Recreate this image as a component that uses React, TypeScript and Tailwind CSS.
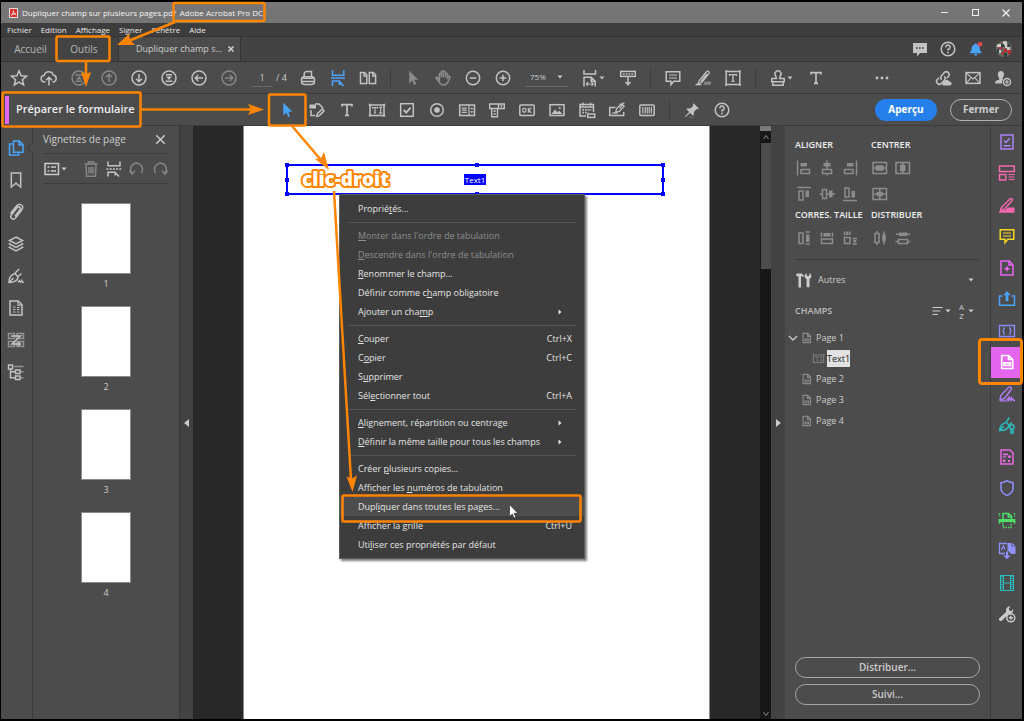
import React from "react";
import clsx from "clsx";
import { twMerge } from "tailwind-merge";

interface IconProps {
  name: keyof typeof glyphs;
  className?: string;
}

// 18x18 glyphs, stroked with the current colour unless a shape says otherwise
const glyphs = {
  star: <path d="M9 1.8l2.1 5 5.4.4-4.1 3.5 1.3 5.3L9 13.1l-4.7 2.9 1.3-5.3-4.1-3.5 5.4-.4z" />,
  cloudUp: (
    <>
      <path d="M5.5 13H4.6a3.3 3.3 0 0 1-.4-6.6A4.7 4.7 0 0 1 13.3 6a3.6 3.6 0 0 1 .3 7h-1.1" />
      <path d="M9 16.5V8.5M6 11.3l3-3 3 3" />
    </>
  ),
  first: (
    <>
      <circle cx="9" cy="9" r="7" />
      <path d="M5.5 6h7M6 12.3h6" />
      <path d="M9 7l3 3.5H6z" fill="currentColor" stroke="none" />
    </>
  ),
  up: (
    <>
      <circle cx="9" cy="9" r="7" />
      <path d="M9 13V5.5M6 8.3l3-3 3 3" />
    </>
  ),
  down: (
    <>
      <circle cx="9" cy="9" r="7" />
      <path d="M9 5v7.5M6 9.7l3 3 3-3" />
    </>
  ),
  last: (
    <>
      <circle cx="9" cy="9" r="7" />
      <path d="M5.5 12.3h7M6 5.8h6" />
      <path d="M9 11L6 7.5h6z" fill="currentColor" stroke="none" />
    </>
  ),
  back: (
    <>
      <circle cx="9" cy="9" r="7" />
      <path d="M13 9H5.5M8.3 6l-3 3 3 3" />
    </>
  ),
  forward: (
    <>
      <circle cx="9" cy="9" r="7" />
      <path d="M5 9h7.5M9.7 6l3 3-3 3" />
    </>
  ),
  print: (
    <>
      <path d="M5.2 7.5V4.3L7 2.5h5.5v5" />
      <rect x="2.5" y="7.8" width="13" height="7.6" rx="2.8" />
      <path d="M3 12.5h12M3.5 9.2h11" />
    </>
  ),
  fitWidth: <path d="M3.5 1v5.2h11.3V1M2 9h14M3.5 17v-5h6.8l4 5M10.3 12v3.2h3M14.6 17v-1" />,
  twoPages: <path d="M1.5 3.5h4l2.3 2.3v8.7H1.5zM5 3.5V7h2.8M10.3 3.5h4l2.3 2.3v8.7h-6.3zM13.8 3.5V7h2.8" />,
  pointer: <path d="M5.3 1.8v12.6l3-2.8 1.8 4.3 2-.9-1.8-4.2h4z" fill="currentColor" stroke="none" />,
  hand: <path d="M5.3 11.6V5.2a1 1 0 0 1 2 0v3.3V3a1 1 0 0 1 2 0v5.3-5a1 1 0 0 1 2.1 0v5.2-3.3a1 1 0 0 1 2.1 0v3.7l1-1.3c.8-.6 1.8-.2 1.5.7l-2 4.6c-.8 1.9-2.2 3-4.3 3-2.4 0-3.5-1-4.6-2.8L2 9.3c-.3-1 .9-1.5 1.6-.6z" />,
  minus: (
    <>
      <circle cx="9" cy="9" r="6.7" />
      <path d="M5.7 9h6.6" />
    </>
  ),
  plus: (
    <>
      <circle cx="9" cy="9" r="6.7" />
      <path d="M5.7 9h6.6M9 5.7v6.6" />
    </>
  ),
  fitPage: (
    <>
      <path d="M3 1v4h11.5V1M3 17.5V8.3h7.2l4 4v5.2M10.2 8.3v4h4" />
      <path d="M5.3 15h6.8M7 13.2L5.3 15 7 16.8M10.5 13.2l1.7 1.8-1.7 1.8" strokeWidth="1.1" />
    </>
  ),
  scroll: (
    <>
      <rect x="1.7" y="2.4" width="14.6" height="5" />
      <path d="M4 5h10" strokeDasharray="1.6 1.2" />
      <path d="M9 8v7.5M6.5 13L9 15.6l2.5-2.6" />
    </>
  ),
  comment: (
    <>
      <path d="M2.2 2.7h13.6v9.6H9.8L7 15.6v-3.3H2.2z" />
      <path d="M5 6h8M5 9h8" strokeWidth="1.2" />
    </>
  ),
  highlight: (
    <>
      <path d="M9 15.7L11 12.5h6v3.2z" fill="#858585" stroke="none" />
      <path d="M5.5 11.3l7.2-8.8c1.2-1 3.2.5 2.4 1.9l-7.2 8.9-4.400 2zM7 12.500L13 5M1.500 15.600h6" strokeWidth="1.3" />
    </>
  ),
  textBox: (
    <>
      <rect x="2.2" y="2.5" width="13.6" height="13" />
      <path d="M5.6 7V5.6h6.8V7M9 5.6v6.8M7.5 12.4h3M1 1.8h1.8M15.2 1.8H17M1 16.2h1.8M15.2 16.2H17" strokeWidth="1.3" />
    </>
  ),
  stamp: (
    <>
      <path d="M7.3 9.5L6.8 7a3 3 0 1 1 4.4 0l-.5 2.5h4.5v3.3H2.8V9.5z" />
      <path d="M3.8 13v3.2h10.4V13" />
    </>
  ),
  text: <path d="M4 5.5V3.6h10v1.9M9 3.6v10.8M7 14.4h4" strokeWidth="1.7" />,
  dots: (
    <g fill="currentColor" stroke="none">
      <circle cx="4" cy="9" r="1.4" />
      <circle cx="9" cy="9" r="1.4" />
      <circle cx="14" cy="9" r="1.4" />
    </g>
  ),
  linkCloud: (
    <>
      <path d="M7.5 10.7a3 3 0 0 1 0-4l2.8-3.1a2.8 2.8 0 0 1 4 4l-1.6 1.7M10.3 7.2a3 3 0 0 1 0 4l-2.9 3.2a2.8 2.8 0 0 1-4-4L5 8.7" />
      <path d="M10.3 16.6a2 2 0 0 1-.2-4 2.8 2.8 0 0 1 5.2-.2 2.1 2.1 0 0 1 .4 4.2z" fill="currentColor" stroke="none" />
    </>
  ),
  mail: (
    <>
      <rect x="2" y="3.6" width="14" height="10.8" />
      <path d="M2.3 4.2L9 10l6.7-5.8M2.5 14l4.6-5.4M15.5 14l-4.6-5.4" strokeWidth="1.1" />
    </>
  ),
  personAdd: (
    <>
      <path d="M1 14.5c0-2.700 2-3 3.900-3.700.6-.3.5-1 0-1.800C3.200 6 3.300 2 6.900 2s3.700 4 2 7c-.5.8-.5 1.500.1 1.800A5 5 0 0 0 8 14.500z" fill="currentColor" stroke="none" />
      <circle cx="13" cy="13" r="3.500" />
      <path d="M11 13h4M13 11v4" strokeWidth="1.2" />
    </>
  ),
  editPage: (
    <>
      <path d="M7 3h4l3.500 3.500V9M3 9v5.500h4" />
      <path d="M1.500 3.500h6.500v4H1.500z" fill="currentColor" stroke="none" />
      <path d="M8.600 15.500l.6-2.500 5-5 1.900 1.900-5 5z" />
    </>
  ),
  textField: (
    <>
      <rect x="2" y="4" width="14" height="10.5" />
      <path d="M4.5 7.8V6.5h5v1.3M7 6.5V12M6 12h2M11.2 6.3h3M11.2 12.2h3M12.7 6.3v6" strokeWidth="1.2" />
      <path d="M.8 2.8h2v2h-2zM15.2 2.8h2v2h-2zM.8 13.4h2v2h-2zM15.2 13.4h2v2h-2z" fill="currentColor" stroke="none" />
    </>
  ),
  checkbox: (
    <>
      <rect x="2.7" y="2.7" width="12.6" height="12.6" />
      <path d="M5.7 9l2.5 2.6 4.3-5" strokeWidth="2" />
    </>
  ),
  radio: (
    <>
      <circle cx="9" cy="9" r="6.3" />
      <circle cx="9" cy="9" r="2.8" fill="currentColor" stroke="none" />
    </>
  ),
  listBox: (
    <>
      <rect x="1.7" y="4" width="14.8" height="10.5" />
      <path d="M3.8 7.2h5M3.8 9.2h5M3.8 11.3h5M11 4.3v10" strokeWidth="1.2" />
      <path d="M12 8.3l1.8-2 1.8 2zM12 10.3l1.8 2 1.8-2z" fill="currentColor" stroke="none" />
    </>
  ),
  dropList: (
    <>
      <path d="M1.7 3h14.6v4.5H1.7zM3.7 7.5v8.3h5.8V7.5M10.5 3v4.500M5.500 10h2.300M5.500 13h2.300" strokeWidth="1.4" />
      <path d="M11.700 4.500h3.300l-1.650 1.800z" fill="currentColor" stroke="none" />
    </>
  ),
  okButton: (
    <>
      <rect x="1.8" y="4" width="14.4" height="10.5" rx="1" />
      <rect x="4.8" y="7.4" width="3" height="3.7" rx="1" strokeWidth="1.2" />
      <path d="M10.3 6.8v4.9M13.3 6.8l-2.6 2.4 2.7 2.5" strokeWidth="1.2" />
    </>
  ),
  image: (
    <>
      <rect x="2" y="3.7" width="14" height="10.8" />
      <path d="M3.5 13l3.5-4.5 2.5 2.7 1.7-1.4 3.3 3.2z" fill="currentColor" stroke="none" />
      <circle cx="11.7" cy="7" r="1.1" fill="currentColor" stroke="none" />
    </>
  ),
  calendar: (
    <>
      <path d="M8 15H2V3.5h13.5V11M2 6h13.5M5 1.8v3M12.5 1.8v3" />
      <path d="M4.3 8.8h9M4.3 11.7h6" strokeWidth="1.7" strokeDasharray="1.7 1" />
      <rect x="9.7" y="13" width="7" height="3.4" />
    </>
  ),
  signField: (
    <>
      <path d="M7.5 6.5H1.7v8h14V11" />
      <path d="M7.5 11.5l1.3-4.2 4.7-4.6 2.7 2.6-4.7 4.8zM11.5 7.3l4.8-6" strokeWidth="1.3" />
      <path d="M4 12h6" strokeWidth="1.2" />
    </>
  ),
  barcode: (
    <>
      <rect x="1.8" y="4" width="14.4" height="10.5" rx="1" />
      <path d="M4.8 6v6.5M7.2 6v6.5M9.2 6v6.5M11.2 6v6.5M13.4 6v6.5" strokeWidth="1.2" />
    </>
  ),
  pin: (
    <>
      <path d="M10.5 2.3l5.3 5.2-1.5.8-1-.1-2.3 2.5-.1 3-1 .9-2.7-2.7-4.7 4-.5-.4 4.2-4.6L3.5 8.2l1-.9 3 .1 2.6-2.700-.2-1.200z" fill="currentColor" stroke="none" />
      <path d="M6 16.3h5" stroke="#666" />
    </>
  ),
  help: (
    <>
      <circle cx="9" cy="9" r="6.8" />
      <path d="M6.9 7.4A2.1 2.1 0 1 1 9 9.3v1.2" />
      <circle cx="9" cy="12.5" r=".9" fill="currentColor" stroke="none" />
    </>
  ),
  thumbs: (
    <>
      <path d="M6.5 2h5.8l3.7 3.7v7.500H6.500zM12 2v4h4" />
      <path d="M6 5H2.5v11h9.2v-2.5" />
    </>
  ),
  bookmark: <path d="M4.3 2h9.400v14L9 12.200 4.300 16z" />,
  clip: <path d="M8 13.3l5-6.8c1.3-2-1.300-3.900-2.800-2L4.300 12c-1.800 2.800 2 5.700 4.200 3l6.300-8.300C17.500 3 12.800-.8 9.700 2.700L3.500 10.500" />,
  layers: (
    <>
      <path d="M9 2l6.500 3.500L9 9 2.500 5.500z" />
      <path d="M3.5 8.3L2.5 9 9 12.4 15.5 9l-1-.7M3.5 11.7l-1 .7L9 16l6.5-3.6-1-.7" />
    </>
  ),
  penSign: (
    <>
      <path d="M2 15.500C1.500 11 4.500 7.300 8 6.500l3 3.200c0 4-4.500 6-9 5.800zM2.500 15l4-4M8.200 6L12 2M11.200 9.300l3.300-2.800" />
      <path d="M10.8 15.3l1.5-2 1 2 1.500-2 .7 2h1.500" strokeWidth="1.2" />
    </>
  ),
  article: (
    <>
      <path d="M3 2h8.200L15 5.800V16H3z" />
      <path d="M11 2v4.200h4M6 8h2.500M6 10.500h2.500M6 13h2.500M10 8.500h2.500M10 10.500h2.500M10 13h2.500" strokeWidth="1.2" />
    </>
  ),
  order: (
    <>
      <path d="M1.5 2.500h6v5h-6zM10 2.500h6.500v5H10zM1.500 10.500h6v5h-6zM10 10.500h6.500v5H10z" opacity=".6" />
      <path d="M4 5h9.500L5 13h8M11 11l2.500 2-2.500 2" />
    </>
  ),
  tags: (
    <>
      <path d="M1.5 2h4v4h-4zM8.500 7h4.500v3.500H8.500zM8.500 13h4.500v3.500H8.500zM3.500 6.500v8.200h5M3.500 8.700h5" />
      <path d="M7 3.500h9.500M14 8.700h2.500M14 14.700h2.500" opacity=".6" />
    </>
  ),
  listOptions: (
    <>
      <rect x="2" y="3.5" width="13.5" height="11" />
      <path d="M4.5 7h2M4.5 11h2M8 7h5M8 11h5" strokeWidth="1.7" />
    </>
  ),
  trash: <path d="M2.500 4h13M6.300 4V2h5.400v2M4 4.500l.6 11.800h8.800L14 4.500M7 7v6.500M9 7v6.500M11 7v6.500" />,
  insert: (
    <>
      <path d="M3 1.500v4.300h12V1.500M3 16.500v-4.300h7l4 4.300M10.300 12.500v3" />
      <path d="M1.500 9h15" strokeDasharray="2 1.2" />
    </>
  ),
  rotateLeft: <path d="M4.200 13.500A6 6 0 1 1 13.300 13M1.300 11l3 3 2.700-3.400" />,
  rotateRight: <path d="M13.800 13.500A6 6 0 1 0 4.700 13M16.700 11l-3 3-2.700-3.400" />,
  alignLeft: (
    <>
      <path d="M2.500 1.500v15M6 10.500h8.500v4H6z" />
      <path d="M5.500 4h6.500v3.500H5.500z" fill="currentColor" stroke="none" />
    </>
  ),
  alignCenter: (
    <>
      <path d="M9 1.500v9M9 14.500v2M4.500 10.500h9v4h-9z" />
      <path d="M5.500 4h7v3.500h-7z" fill="currentColor" stroke="none" />
    </>
  ),
  alignRight: (
    <>
      <path d="M15.500 1.500v15M3.500 10.500H12v4H3.500z" />
      <path d="M6 4h6.500v3.500H6z" fill="currentColor" stroke="none" />
    </>
  ),
  alignTop: (
    <>
      <path d="M2 2.500h14M4 6h4v9H4z" />
      <path d="M10.500 5.500H14v6.500h-3.500z" fill="currentColor" stroke="none" />
    </>
  ),
  alignMiddle: (
    <>
      <path d="M1.500 9h3M8.500 9H17M4.500 4.500h4v9h-4z" />
      <path d="M11 5.500h3.500v7H11z" fill="currentColor" stroke="none" />
    </>
  ),
  alignBottom: (
    <>
      <path d="M2 15.500h14M4 3h4v9H4z" />
      <path d="M10.500 6H14v6.500h-3.500z" fill="currentColor" stroke="none" />
    </>
  ),
  centerH: (
    <>
      <path d="M2 3.500h13.500v11H2zM2 9h13" />
      <path d="M5.500 7h6.500v4H5.500z" fill="currentColor" />
    </>
  ),
  centerV: (
    <>
      <path d="M2 3.500h13.500v11H2zM8.800 3.500v11" />
      <path d="M6.800 6.500h4v5h-4z" fill="currentColor" />
    </>
  ),
  centerBoth: (
    <>
      <path d="M2 3.500h13.500v11H2zM2 9h13M8.800 3.500v11" />
      <path d="M6.500 7.500h4.500v3H6.500z" fill="currentColor" />
    </>
  ),
  sameHeight: (
    <>
      <path d="M4 4h4v10.500H4zM10.500 3H15M10.500 15H15" />
      <path d="M11 5.500h3.500v7.500H11z" fill="currentColor" stroke="none" />
    </>
  ),
  sameWidth: (
    <>
      <path d="M3.500 10h11v4.500h-11zM3.500 3.500V8M14.500 3.500V8" />
      <path d="M5.500 4h7v3.500h-7z" fill="currentColor" stroke="none" />
    </>
  ),
  sameBoth: (
    <>
      <path d="M3.500 8.500H9v6H3.500zM3.500 2.500V6M9 2.500V6M11.500 9.500H16M11.500 15H16" />
      <path d="M5 2.500h2.500v3.500H5zM12.300 11h3v2.500h-3z" fill="currentColor" stroke="none" />
    </>
  ),
  distH: (
    <>
      <path d="M4 4.500h4v9H4zM6 2v2.500M6 13.500V16M13 2.500v13" />
      <path d="M11.300 5.500h3.500v7h-3.500z" fill="currentColor" stroke="none" />
    </>
  ),
  distV: (
    <>
      <path d="M2 5.200h14M4.500 10.500h9v4h-9zM1.500 12.500h3M13.500 12.500h3" />
      <path d="M5 3.500h8V7H5z" fill="currentColor" stroke="none" />
    </>
  ),
  tools: (
    <g fill="currentColor" stroke="none">
      <path d="M1.500 2.500h5l2.500 2-.8 1.500-2.200-.9V16.500H3.500V5.500L1.200 5z" />
      <path d="M11.500 2l.3 3h2.400l.4-3c2.600 1.700 2.300 5-.1 6v7.500c0 1.200-2.900 1.200-2.900 0V8C9 7 9 3.700 11.500 2z" />
    </g>
  ),
  sort: <path d="M2 4.500h13M2 9h10M2 13.500h7" />,
  page: <path d="M4 3h6l3.500 3.500V15H4zM9.800 3v4h3.700M6.500 12.500v-2.200h4.500v2.200z" />,
  requestSign: (
    <>
      <rect x="3" y="2" width="12" height="14" />
      <path d="M6 7.500l2 2 3.700-4.200M5.500 12.800h7" />
    </>
  ),
  organize: (
    <>
      <path d="M1.500 2h14.800v5.500H1.500zM1.500 10.500h6.300V16H1.500z" />
      <path d="M10.500 10.500h6M10.500 13h6M10.500 15.500h6" strokeWidth="1" />
    </>
  ),
  editPdf: (
    <>
      <path d="M3.500 11.500L11.800 3c1.500-1.200 3.200.2 2.200 1.800l-8 8.600-3.800 1.800z" />
      <path d="M1 16.800c1-2 3-2.800 5.500-2.300L10 11.500h6.500v5.300z" fill="currentColor" stroke="none" />
    </>
  ),
  createPdf: (
    <>
      <path d="M3 2h8.200L15 5.800V16H3zM11 2v4h4" />
      <path d="M9 6.500l1 2.200 2.500 1L10 10.800 9 13l-1-2.200-2.500-1.100L8 8.700z" fill="currentColor" stroke="none" />
    </>
  ),
  exportPdf: (
    <>
      <path d="M4.500 6h-3v9.300h15V6h-3" />
      <path d="M9 1l3.700 4.200h-2.300v6H7.600v-6H5.300z" fill="currentColor" stroke="none" />
    </>
  ),
  code: <path d="M1.500 3.500h15v11h-15zM7 6c-1.500 0-1.300.5-1.300 1.500S5.200 9 4.500 9c.7 0 1.200.5 1.200 1.500S5.500 12 7 12M11 6c1.500 0 1.300.5 1.300 1.500s.5 1.500 1.200 1.500c-.7 0-1.200.5-1.200 1.500s.2 1.500-1.300 1.500" strokeWidth="1.3" />,
  form: <path d="M3.700 2.500h7l4 4v9h-11zM10.500 2.500v4h4M6 12.300v-2.500h6.300v2.500z" strokeWidth="1.7" />,
  fillSign: (
    <>
      <path d="M2 14.800l.9-4.500L10.500 2.500c1.800-1.300 3.800.3 2.600 2L6.500 13.500z" />
      <path d="M2 15.800h6l3.500-4.300-1 4 2.800-3-.3 3 2-1.700.3 1.700h1.700" strokeWidth="1.3" />
    </>
  ),
  certify: (
    <>
      <path d="M1.500 14.500C2 10 5 7 8.500 6.500l2.500 2.700c-1 3.800-4.500 5.500-9.500 5.300zM2 14l4-4M8.300 6l3-4.500M11.500 8.500l2.500-2" />
      <circle cx="14" cy="11" r="2.2" />
      <path d="M13 13.300V17l1-.7 1 .7v-3.700" />
    </>
  ),
  fillForm: (
    <>
      <path d="M3 2h9l3 3v11H3z" />
      <path d="M5 5.500h5v1.800H5zM10 7.500h3v2.300h-3zM5 8.200h3v1.200H5zM5 11.500h2.500V14H5zM10 12h2v2h-2z" fill="currentColor" stroke="none" />
    </>
  ),
  shield: <path d="M9 1.700c1.800 1.500 3.700 2 6 2.100v5.500c0 3.500-2.500 5.700-6 7.200-3.500-1.500-6-3.700-6-7.200V3.800c2.300-.1 4.200-.6 6-2.100z" />,
  scan: (
    <>
      <path d="M5 8V2.500h5.500l3 2.500v3M10.300 2.800V6h3" />
      <path d="M1.500 12.500V9h15v3.500M2 10h14" strokeWidth="1.8" />
      <path d="M5 11.500v5h8v-5M1.500 2v3.500M16.500 2v3.500" strokeDasharray="1.500 1" />
    </>
  ),
  exportTo: (
    <>
      <path d="M7 11.500H1.500v-10H9M3.500 8l2-4 1.500 3.500" strokeWidth="1.3" />
      <path d="M9.500 1h4v3.500H17.500V12h-4.500L10.700 9H9.500zM14.300 1l3 2.700h-3zM8 9.500h2.200v4h2.500L9 17.300l-3.700-3.800H8z" fill="currentColor" stroke="none" />
    </>
  ),
  film: (
    <>
      <rect x="2.5" y="1.5" width="13" height="15" strokeWidth="1" />
      <path d="M5.500 1.500v15M12.500 1.500v15M5.500 9h7" strokeWidth="1" />
      <path d="M4 2v14M14 2v14" strokeWidth="1.500" strokeDasharray="1 1" />
    </>
  ),
  moreTools: (
    <>
      <path d="M1.300 13.200l7-6.500C7.300 3.500 9.500.8 12.500 1.500l-1.800 2.300.9 1.900 2.300.2L15 3.500c.5 1.800 0 3.300-1 4.300-1 1-2 1-3 .7l-7.200 7.200c-1.700 1.200-3.800-1-2.500-2.500z" fill="currentColor" stroke="none" />
      <circle cx="12.8" cy="12.8" r="4" fill="#4c4c4c" />
      <path d="M10.800 12.800h4M12.800 10.800v4" />
    </>
  ),
  chat: (
    <>
      <path d="M2 3h14v10H9l-3 3.500V13H2z" fill="currentColor" stroke="none" />
      <path d="M5 8h8" stroke="#434343" strokeDasharray="1.7 1.3" />
    </>
  ),
  close: <path d="M4.5 4.500l9 9M13.500 4.500l-9 9" />,
};

const Icon: React.FC<IconProps> = ({ name, className }) => (
  <svg
    viewBox="0 0 18 18"
    fill="none"
    stroke="currentColor"
    strokeWidth="1.5"
    aria-hidden="true"
    className={twMerge("size-[18px] shrink-0", className)}
  >
    {glyphs[name]}
  </svg>
);

const Caret: React.FC = () => (
  <svg viewBox="0 0 6 4" className="h-1 w-[6px] shrink-0" aria-hidden="true">
    <path d="M.5.5h5L3 3.500z" fill="currentColor" />
  </svg>
);

interface ToolProps {
  icon: IconProps["name"];
  label: string;
  className?: string;
  caret?: boolean;
}

const Tool: React.FC<ToolProps> = ({ icon, label, className, caret }) => (
  <button
    type="button"
    aria-label={label}
    className={twMerge(
      "flex h-7 w-[30px] shrink-0 items-center justify-center text-[#c2c2c2]",
      caret && "w-[38px] justify-start pl-[6px]",
      className
    )}
  >
    <Icon name={icon} />
    {caret && <Caret />}
  </button>
);

const Divider: React.FC = () => (
  <span className="mx-[7px] h-[18px] w-px shrink-0 bg-[#3d3d3d]" />
);

const navTools: ToolProps[] = [
  { icon: "star", label: "Favoris" },
  { icon: "cloudUp", label: "Enregistrer dans le cloud" },
  { icon: "first", label: "Première page", className: "text-[#868686]" },
  { icon: "up", label: "Page précédente", className: "text-[#868686]" },
  { icon: "down", label: "Page suivante" },
  { icon: "last", label: "Dernière page" },
  { icon: "back", label: "Vue précédente" },
  { icon: "forward", label: "Vue suivante", className: "text-[#868686]" },
];

const formTools: ToolProps[] = [
  { icon: "pointer", label: "Sélectionner", className: "text-[#4ba3f7]" },
  { icon: "editPage", label: "Modifier" },
  { icon: "text", label: "Texte" },
  { icon: "textField", label: "Champ de texte" },
  { icon: "checkbox", label: "Case à cocher" },
  { icon: "radio", label: "Bouton radio" },
  { icon: "listBox", label: "Zone de liste" },
  { icon: "dropList", label: "Liste déroulante" },
  { icon: "okButton", label: "Bouton" },
  { icon: "image", label: "Image" },
  { icon: "calendar", label: "Date" },
  { icon: "signField", label: "Signature" },
  { icon: "barcode", label: "Code à barres" },
];

const leftRail: ToolProps[] = [
  { icon: "thumbs", label: "Vignettes de page", className: "text-[#4ba3f7]" },
  { icon: "bookmark", label: "Signets" },
  { icon: "clip", label: "Pièces jointes" },
  { icon: "layers", label: "Calques" },
  { icon: "penSign", label: "Signatures" },
  { icon: "article", label: "Articles" },
  { icon: "order", label: "Ordre" },
  { icon: "tags", label: "Balises" },
];

const rightRail: ToolProps[] = [
  { icon: "requestSign", label: "Demander une signature", className: "text-[#ab82f5]" },
  { icon: "organize", label: "Organiser les pages", className: "text-[#f668ae]" },
  { icon: "editPdf", label: "Modifier le PDF", className: "text-[#f668ae]" },
  { icon: "comment", label: "Commentaire", className: "text-[#f5d51d]" },
  { icon: "createPdf", label: "Créer un fichier PDF", className: "text-[#e667f0]" },
  { icon: "exportPdf", label: "Partager", className: "text-[#4ba3f7]" },
  { icon: "code", label: "Actions", className: "text-[#8c8cf5]" },
  { icon: "form", label: "Préparer le formulaire", className: "bg-[#e566ee] text-white" },
  { icon: "fillSign", label: "Remplir et signer", className: "text-[#b07cee]" },
  { icon: "certify", label: "Certificats", className: "text-[#2bbcc0]" },
  { icon: "fillForm", label: "Convertir", className: "text-[#e667e0]" },
  { icon: "shield", label: "Protection", className: "text-[#9090ff]" },
  { icon: "scan", label: "Numérisation et OCR", className: "text-[#4fe06a]" },
  { icon: "exportTo", label: "Exporter un fichier PDF", className: "text-[#9090ff]" },
  { icon: "film", label: "Multimédia", className: "text-[#2bbcc0]" },
  { icon: "moreTools", label: "Autres outils" },
];

interface MenuEntry {
  before: string;
  key?: string;
  after?: string;
  shortcut?: string;
  disabled?: boolean;
  submenu?: boolean;
  active?: boolean;
}

const menuGroups: MenuEntry[][] = [
  [{ before: "Proprié", key: "t", after: "és..." }],
  [
    { before: "", key: "M", after: "onter dans l'ordre de tabulation", disabled: true },
    { before: "", key: "D", after: "escendre dans l'ordre de tabulation", disabled: true },
    { before: "", key: "R", after: "enommer le champ..." },
    { before: "Définir comme c", key: "h", after: "amp obligatoire" },
    { before: "Ajouter un cha", key: "m", after: "p", submenu: true },
  ],
  [
    { before: "", key: "C", after: "ouper", shortcut: "Ctrl+X" },
    { before: "C", key: "o", after: "pier", shortcut: "Ctrl+C" },
    { before: "S", key: "u", after: "pprimer" },
    { before: "Sél", key: "e", after: "ctionner tout", shortcut: "Ctrl+A" },
  ],
  [
    { before: "", key: "A", after: "lignement, répartition ou centrage", submenu: true },
    { before: "", key: "D", after: "éfinir la même taille pour tous les champs", submenu: true },
  ],
  [
    { before: "Créer ", key: "p", after: "lusieurs copies..." },
    { before: "Afficher les ", key: "n", after: "uméros de tabulation" },
    { before: "Dupl", key: "i", after: "quer dans toutes les pages...", active: true },
    { before: "Afficher la ", key: "g", after: "rille", shortcut: "Ctrl+U" },
    { before: "Uti", key: "l", after: "iser ces propriétés par défaut" },
  ],
];

const ContextMenu: React.FC = () => (
  <div
    role="menu"
    className="absolute top-7 left-[51px] z-10 w-[246px] border border-[#5a5a5a] bg-[#3d3d3d] py-1 text-[9px] text-[#e4e4e4] shadow-[2px_2px_2px_rgba(0,0,0,0.5)]"
  >
    {menuGroups.map((group, i) => (
      <React.Fragment key={i}>
        {i > 0 && <div className="mx-2 mt-1 mb-[3px] h-px bg-[#555]" />}
        {group.map((item, j) => (
          <button
            key={j}
            type="button"
            role="menuitem"
            disabled={item.disabled}
            className={clsx(
              "flex h-[19px] w-full items-center justify-between pr-3 pl-[18px]",
              item.disabled && "text-[#8d8d8d]",
              item.active && "bg-[#4d4d4d]"
            )}
          >
            <span className="whitespace-pre">
              {item.before}
              <u className="underline-offset-1">{item.key}</u>
              {item.after}
            </span>
            {item.shortcut && <span>{item.shortcut}</span>}
            {item.submenu && (
              <svg viewBox="0 0 4 6" className="mr-[10px] h-[6px] w-1" aria-hidden="true">
                <path d="M.5.5v5L3.500 3z" fill="currentColor" />
              </svg>
            )}
          </button>
        ))}
      </React.Fragment>
    ))}
  </div>
);

const Handles: React.FC = () => (
  <>
    <i className="absolute -top-[3px] -left-[3px] size-1 bg-[#0000fe]" />
    <i className="absolute -top-[3px] left-1/2 size-1 bg-[#0000fe]" />
    <i className="absolute -top-[3px] -right-[3px] size-1 bg-[#0000fe]" />
    <i className="absolute top-1/2 -left-[3px] size-1 -translate-y-1/2 bg-[#0000fe]" />
    <i className="absolute top-1/2 -right-[3px] size-1 -translate-y-1/2 bg-[#0000fe]" />
    <i className="absolute -bottom-[3px] -left-[3px] size-1 bg-[#0000fe]" />
    <i className="absolute -bottom-[3px] left-1/2 size-1 bg-[#0000fe]" />
    <i className="absolute -right-[3px] -bottom-[3px] size-1 bg-[#0000fe]" />
  </>
);

const Header: React.FC = () => (
  <header>
    <div className="flex h-[21px] items-center bg-[#757575] pr-2 pl-2 text-[8px] text-[#f4f4f4]">
      <svg viewBox="0 0 9 10" className="mr-1 h-[10px] w-[9px]" aria-hidden="true">
        <rect width="9" height="10" rx="1" fill="#e8e0de" />
        <rect x="1" y="1" width="7" height="8" fill="#d8322c" />
        <path d="M2.500 7.500C4 5.500 4.600 4 4.400 2.500M4.400 3.500C5 5.500 6 6 7 6.200M2.500 7C4 6 5.500 5.800 7 6.200" stroke="#fff" strokeWidth=".8" fill="none" />
      </svg>
      <h1 className="whitespace-nowrap">Dupliquer champ sur plusieurs pages.pdf</h1>
      <span className="ml-1 whitespace-nowrap">Adobe Acrobat Pro DC</span>
      <div className="ml-auto flex gap-[15px]">
        <button type="button" aria-label="Réduire" className="flex size-4 items-center justify-center">
          <span className="h-px w-[7px] bg-[#e8e8e8]" />
        </button>
        <button type="button" aria-label="Agrandir" className="flex size-4 items-center justify-center">
          <span className="size-[7px] border border-[#f0f0f0]" />
        </button>
        <button type="button" aria-label="Fermer la fenêtre" className="flex size-4 items-center justify-center">
          <Icon name="close" className="size-[14px]" />
        </button>
      </div>
    </div>

    <nav className="flex h-[13px] items-center gap-[9px] bg-[#3d3d3d] pl-[6px] text-[8px] leading-3 text-[#e8e8e8]">
      {["Fichier", "Edition", "Affichage", "Signer", "Fenêtre", "Aide"].map((item) => (
        <button key={item} type="button">
          {item}
        </button>
      ))}
    </nav>

    <div className="flex h-[26px] border-y border-[#333] bg-[#434343] text-[10px] text-[#b8b8b8]">
      <button type="button" className="w-[59px]">
        Accueil
      </button>
      <button type="button" className="w-12">
        Outils
      </button>
      <div className="ml-[10px] flex w-[123px] items-center justify-between border-x border-[#363636] bg-[#4c4c4c] pr-1 pl-[17px] text-[9px] whitespace-nowrap text-[#cfcfcf]">
        Dupliquer champ s...
        <button type="button" aria-label="Fermer l'onglet">
          <Icon name="close" className="size-[10px] stroke-[3]" />
        </button>
      </div>
      <div className="ml-auto flex items-center pr-1">
        <Tool icon="chat" label="Commentaires" className="h-6 w-7" />
        <Tool icon="help" label="Aide" className="h-6 w-7" />
        <button type="button" aria-label="Notifications" className="flex w-7 justify-center">
          <svg viewBox="0 0 16 16" className="size-4" aria-hidden="true">
            <path d="M7 2.500h1.500l.5 1c2.500.6 3 3 3 5.500l1.800 3.200H1.700L3.500 9c0-2.500.6-4.900 3-5.500zM6 13h3.500c-.3 2-3.200 2-3.500 0z" fill="#4ba3f7" />
            <circle cx="12" cy="3.2" r="2.3" fill="#e34850" />
          </svg>
        </button>
        <button type="button" aria-label="Profil" className="flex w-7 justify-center">
          <svg viewBox="0 0 16 16" className="size-4 rounded-full" aria-hidden="true">
            <rect width="16" height="16" fill="#6d6660" />
            <path d="M0 3h5v3H0zM7 0h4v4H7zM11 6h3v3h-3zM3 9h2v3H3zM9 4h2v3H9z" fill="#c9cdc8" />
            <path d="M8 8h3v3H8zM3 6h3v2H3zM12 9h3v4h-3zM6 11h2v2H6z" fill="#b8282c" />
            <path d="M5 3h3v3H5zM8 12h3v4H8zM1 8h2v4H1zM12 3h2v3h-2z" fill="#2c4440" />
          </svg>
        </button>
      </div>
    </div>
  </header>
);

const Toolbar: React.FC = () => (
  <div className="flex h-8 items-center border-b border-[#3a3a3a] bg-[#4c4c4c] pr-1 pl-[3px]">
    {navTools.map((tool) => (
      <Tool key={tool.icon} {...tool} />
    ))}
    <input
      aria-label="Numéro de page"
      defaultValue="1"
      className="ml-2 h-[18px] w-5 border-b border-[#6a6a6a] text-center text-[9px]"
    />
    <span className="w-[21px] pl-1 text-[9px] whitespace-nowrap">/ 4</span>
    <Tool icon="print" label="Imprimer" />
    <Tool icon="fitWidth" label="Pleine largeur" className="text-[#4ba3f7]" />
    <Tool icon="twoPages" label="Deux pages" />
    <Divider />
    <Tool icon="pointer" label="Sélection" className="text-[#8a8a8a]" />
    <Tool icon="hand" label="Main" className="text-[#8a8a8a]" />
    <Tool icon="minus" label="Zoom arrière" />
    <Tool icon="plus" label="Zoom avant" />
    <label className="mx-[7px] flex h-[18px] w-[43px] items-center border-b border-[#6a6a6a]">
      <select
        aria-label="Facteur de zoom"
        defaultValue="75"
        className="w-8 appearance-none pl-[5px] text-[8px]"
      >
        <option value="75">75%</option>
        <option value="100">100%</option>
      </select>
      <Caret />
    </label>
    <Tool icon="fitPage" label="Ajuster" caret />
    <Tool icon="scroll" label="Défilement" />
    <Divider />
    <Tool icon="comment" label="Ajouter une note" />
    <Tool icon="highlight" label="Surligner" />
    <Tool icon="textBox" label="Zone de texte" />
    <Divider />
    <Tool icon="stamp" label="Tampon" caret />
    <Tool icon="text" label="Ajouter du texte" />
    <Tool icon="dots" label="Plus" className="ml-9" />
    <div className="ml-auto flex">
      <Tool icon="linkCloud" label="Lien" />
      <Tool icon="mail" label="Courriel" />
      <Tool icon="personAdd" label="Inviter" />
    </div>
  </div>
);

const FormBar: React.FC = () => (
  <div className="flex h-8 items-center border-b border-[#3a3a3a] bg-[#4c4c4c] pr-[10px] pl-1">
    <h2 className="flex h-7 w-[267px] items-center border-l-4 border-[#e566ee] pl-[7px] text-[11px] font-semibold text-[#eeeeee]">
      Préparer le formulaire
    </h2>
    {formTools.map((tool) => (
      <Tool key={tool.icon} {...tool} />
    ))}
    <Divider />
    <Tool icon="pin" label="Épingler" />
    <Tool icon="help" label="Aide du formulaire" />
    <button
      type="button"
      className="ml-auto h-[22px] w-[62px] rounded-full bg-[#2680eb] text-[10px] font-bold text-white"
    >
      Aperçu
    </button>
    <button
      type="button"
      className="ml-[13px] h-[22px] w-[62px] rounded-full border border-[#b0b0b0] text-[10px] font-bold text-[#cccccc]"
    >
      Fermer
    </button>
  </div>
);

const ThumbnailPanel: React.FC = () => (
  <aside className="w-[146px] shrink-0 bg-[#4c4c4c] px-[10px]">
    <div className="flex h-7 items-center justify-between border-b border-[#3d3d3d] text-[10px]">
      <h3>Vignettes de page</h3>
      <button type="button" aria-label="Fermer le volet">
        <Icon name="close" className="size-[17px]" />
      </button>
    </div>
    <div className="flex h-[30px] items-center border-b border-[#3d3d3d]">
      <button type="button" aria-label="Options" className="flex w-[25px] items-center">
        <Icon name="listOptions" />
        <Caret />
      </button>
      <span className="ml-1 h-[18px] w-px bg-[#3d3d3d]" />
      <Tool icon="trash" label="Supprimer la page" className="ml-2 w-[23px] text-[#868686]" />
      <Tool icon="insert" label="Insérer" className="w-[23px]" />
      <Tool icon="rotateLeft" label="Rotation à gauche" className="w-[23px] text-[#868686]" />
      <Tool icon="rotateRight" label="Rotation à droite" className="w-[23px] text-[#868686]" />
    </div>
    <ol className="mt-[19px] flex flex-col items-center gap-4 text-[9px]">
      {[1, 2, 3, 4].map((page) => (
        <li key={page} className="flex flex-col items-center gap-1">
          <div className="h-[71px] w-[50px] border border-[#8a8a8a] bg-white" />
          <span className="leading-3">{page}</span>
        </li>
      ))}
    </ol>
  </aside>
);

interface ToolGroupProps {
  title: string;
  tools: ToolProps[];
  className?: string;
}

const ToolGroup: React.FC<ToolGroupProps> = ({ title, tools, className }) => (
  <section>
    <h3 className="text-[9px] leading-4 font-semibold text-[#eeeeee]">{title}</h3>
    <div className={twMerge("mt-[2px] grid w-[69px] grid-cols-3 text-[#8c8c8c]", className)}>
      {tools.map((tool) => (
        <button key={tool.icon} type="button" aria-label={tool.label} className="flex h-[26px] items-center">
          <Icon name={tool.icon} />
        </button>
      ))}
    </div>
  </section>
);

const FieldsPanel: React.FC = () => (
  <aside className="flex w-[205px] shrink-0 flex-col bg-[#4c4c4c] px-[10px] pt-[11px] pb-[14px]">
    <div className="grid grid-cols-[76px_1fr]">
      <ToolGroup
        title="ALIGNER"
        tools={[
          { icon: "alignLeft", label: "Aligner à gauche" },
          { icon: "alignCenter", label: "Aligner au centre" },
          { icon: "alignRight", label: "Aligner à droite" },
          { icon: "alignTop", label: "Aligner en haut" },
          { icon: "alignMiddle", label: "Aligner au milieu" },
          { icon: "alignBottom", label: "Aligner en bas" },
        ]}
      />
      <ToolGroup
        title="CENTRER"
        className="w-[46px] grid-cols-2"
        tools={[
          { icon: "centerH", label: "Centrer verticalement" },
          { icon: "centerV", label: "Centrer horizontalement" },
          { icon: "centerBoth", label: "Centrer les deux" },
        ]}
      />
      <ToolGroup
        title="CORRES. TAILLE"
        tools={[
          { icon: "sameHeight", label: "Même hauteur" },
          { icon: "sameWidth", label: "Même largeur" },
          { icon: "sameBoth", label: "Même taille" },
        ]}
      />
      <ToolGroup
        title="DISTRIBUER"
        className="w-[46px] grid-cols-2"
        tools={[
          { icon: "distH", label: "Répartir horizontalement" },
          { icon: "distV", label: "Répartir verticalement" },
        ]}
      />
    </div>
    <button type="button" className="mt-2 flex h-10 items-center border-t border-[#3d3d3d] pr-[6px] text-[9px]">
      <Icon name="tools" />
      <span className="mr-auto ml-[5px]">Autres</span>
      <Caret />
    </button>
    <div className="flex h-6 items-center pr-[6px]">
      <h3 className="mr-auto text-[9px] font-semibold text-[#bcbcbc]">CHAMPS</h3>
      <button type="button" aria-label="Trier" className="flex items-center">
        <Icon name="sort" className="size-[14px]" />
        <Caret />
      </button>
      <button type="button" aria-label="Ordre alphabétique" className="ml-2 flex items-center gap-1">
        <span className="flex flex-col text-[8px] leading-[9px]">
          <span>A</span>
          <span>Z</span>
        </span>
        <Caret />
      </button>
    </div>
    <ul className="mt-1 text-[9px]">
      <li>
        <div className="flex h-[21px] items-center">
          <svg viewBox="0 0 10 6" className="-ml-[7px] h-[6px] w-[10px]" aria-hidden="true">
            <path d="M1 1l4 4 4-4" stroke="currentColor" strokeWidth="1.3" fill="none" />
          </svg>
          <Icon name="page" className="mx-[2px] size-[14px] text-[#8a8a8a]" />
          Page 1
        </div>
        <div className="flex h-5 items-center pl-[17px]">
          <Icon name="textField" className="size-[13px] text-[#7c7c7c]" />
          <span className="ml-[2px] h-[17px] bg-[#e2e2e2] leading-[17px] text-[#222]">Text1</span>
        </div>
      </li>
      {[2, 3, 4].map((page) => (
        <li key={page} className="flex h-[21px] items-center pl-[3px]">
          <Icon name="page" className="mx-[2px] size-[14px] text-[#8a8a8a]" />
          Page {page}
        </li>
      ))}
    </ul>
    <div className="mt-auto flex flex-col gap-[6px] text-[10px] font-semibold">
      <button type="button" className="h-[21px] rounded-full border border-[#a8a8a8]">
        Distribuer...
      </button>
      <button type="button" className="h-[21px] rounded-full border border-[#a8a8a8]">
        Suivi...
      </button>
    </div>
  </aside>
);

const DocumentView: React.FC = () => (
  <main className="flex min-w-0 flex-1 bg-[#282828]">
    <div className="flex min-w-0 flex-1 px-[50px]">
      <div className="flex-1 border-x border-[#8a8a8a] bg-white">
        <div className="relative mt-[38px] mr-[45px] ml-[42px] flex h-[31px] items-center justify-center border-2 border-[#0000fe]">
          <Handles />
          <span className="bg-[#0000fe] px-px text-[8px] leading-[11px] text-white">Text1</span>
          <ContextMenu />
        </div>
      </div>
    </div>
    <div className="flex w-[11px] flex-col items-center bg-[#171717] text-[#8a8a8a]">
      <div className="h-[5px] w-full bg-[#7a7a7a]" />
      <svg viewBox="0 0 6 12" className="h-3 w-[6px]" aria-hidden="true">
        <path d="M.5 8L3 4.500 5.500 8" stroke="currentColor" fill="none" />
      </svg>
      <div className="h-[126px] w-[10px] bg-[#4c4c4c]" />
      <svg viewBox="0 0 6 12" className="mt-auto h-3 w-[6px]" aria-hidden="true">
        <path d="M.5 5L3 8.500 5.500 5" stroke="currentColor" fill="none" />
      </svg>
    </div>
  </main>
);

// Tutorial marks drawn over the window
const Annotations: React.FC = () => (
  <svg
    viewBox="0 0 1024 721"
    className="pointer-events-none absolute top-0 left-0 z-20 h-[721px] w-[1024px]"
    fill="none"
    stroke="#ff8400"
    strokeWidth="2.5"
    strokeLinejoin="round"
    aria-hidden="true"
  >
    <rect x="173.500" y="3" width="91" height="18" rx="1" />
    <rect x="56.500" y="36.500" width="53" height="24.500" rx="1" />
    <rect x="2.500" y="92.500" width="138" height="34" rx="1" />
    <rect x="269" y="94.500" width="36.500" height="31" rx="1" />
    <rect x="342.500" y="495.500" width="238" height="26" rx="1" />
    <path d="M175 22L126 42M86 62V76M141 109.500H252M292 126L321 160M334 191L351 480" />
    <g fill="#ff8400" stroke="none">
      <path d="M117 45l12-11 1 6 5 5z" />
      <path d="M86 87l-5-15 5 2 5-2z" />
      <path d="M264 109.500l-16 5.500 3-5.500-3-5.500z" />
      <path d="M329 170l-14-11 6-1 3-6z" />
      <path d="M352.500 492l-6-15.500 5.500 2 5-3z" />
    </g>
    <text
      x="302"
      y="186"
      fill="#fff"
      strokeWidth="4"
      paintOrder="stroke"
      className="font-['Open_Sans',sans-serif] text-[19px] font-extrabold"
    >
      clic-droit
    </text>
    <path d="M509.500 504.500v12l2.800-2.500 1.700 4 1.800-.8-1.700-3.900h3.700z" fill="#fff" stroke="#222" strokeWidth=".6" />
  </svg>
);

const App: React.FC = () => (
  <div className="relative overflow-hidden font-['Open_Sans','Noto_Sans',sans-serif] text-[#cccccc]">
    <div className="flex h-screen flex-col border-t-2 border-r-2 border-b-2 border-l border-black bg-[#4c4c4c]">
      <Header />
      <Toolbar />
      <FormBar />
      <div className="flex min-h-0 flex-1">
        <nav className="relative flex w-8 shrink-0 flex-col items-center border-r border-[#3d3d3d] bg-[#4c4c4c] pt-2 pr-px">
          {leftRail.map((tool) => (
            <Tool key={tool.icon} {...tool} className={clsx("mb-1", tool.className)} />
          ))}
          <svg viewBox="0 0 6 12" className="absolute top-4 -right-px h-3 w-[6px]" aria-hidden="true">
            <path d="M6 0L1 6l5 6" fill="#4c4c4c" stroke="#3d3d3d" />
          </svg>
        </nav>
        <ThumbnailPanel />
        <button
          type="button"
          aria-label="Masquer le volet de navigation"
          className="flex w-[14px] shrink-0 items-center justify-center border-l border-[#393939] bg-[#424242]"
        >
          <svg viewBox="0 0 5 8" className="h-2 w-[5px]" aria-hidden="true">
            <path d="M5 0v8L0 4z" fill="currentColor" />
          </svg>
        </button>
        <DocumentView />
        <button
          type="button"
          aria-label="Masquer le volet des outils"
          className="flex w-[14px] shrink-0 items-center justify-center bg-[#424242]"
        >
          <svg viewBox="0 0 5 8" className="h-2 w-[5px]" aria-hidden="true">
            <path d="M0 0v8l5-4z" fill="currentColor" />
          </svg>
        </button>
        <FieldsPanel />
        <nav className="relative flex w-8 shrink-0 flex-col border-l border-[#3d3d3d] bg-[#4c4c4c]">
          <div className="flex h-[504px] flex-col">
            {rightRail.map((tool) => (
              <button
                key={tool.icon}
                type="button"
                aria-label={tool.label}
                className={clsx("flex flex-1 items-center justify-center", tool.className)}
              >
                <Icon name={tool.icon} />
              </button>
            ))}
          </div>
          <span className="pointer-events-none absolute top-[212px] -right-px h-[47px] w-[45px] rounded-sm border-[3px] border-[#ff8400]" />
        </nav>
      </div>
    </div>
    <Annotations />
  </div>
);

export default App;
